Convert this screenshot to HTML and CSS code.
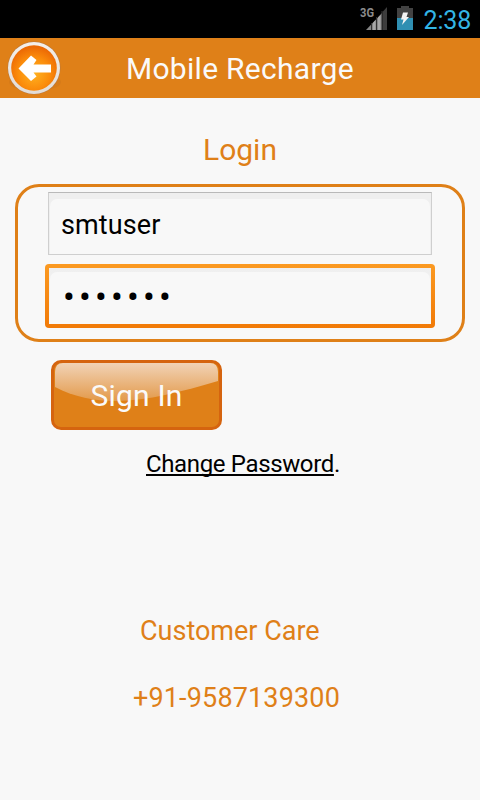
FILE: index.html
```
<!DOCTYPE html>
<html lang="en">
<head>
    <meta charset="utf-8">
    <title>Mobile Recharge</title>
    <link rel="stylesheet" href="styles.css">
</head>
<body>
    <div class="status-bar">
        <svg class="signal" width="28" height="26" viewBox="0 0 28 26">
            <path d="M6 24 22 7V24Z" fill="#858585"/>
            <path d="M13 24V17L15.500 14V24ZM18 24V11.500L20.500 9V24Z" fill="#a8a8a8"/>
            <path d="M22.500 24V6L27 1V24Z" fill="#3c3c3c"/>
            <path d="M11.500 17V24M16.500 11V24M22 5V24" stroke="#333"/>
            <text x="0" y="11" textLength="14" lengthAdjust="spacingAndGlyphs">3G</text>
        </svg>
        <svg class="battery" width="16" height="24" viewBox="0 0 16 24">
            <path d="M4 0H12V2H16V12H0V2H4Z" fill="#424242"/>
            <path d="M0 12H16V24H0Z" fill="#2f8fb2"/>
            <path d="M6 6.500H11L9.500 11H12L5 19 6.500 13.500H4Z" fill="#f4f4f4"/>
        </svg>
        <span class="clock">2:38</span>
    </div>
    <div class="header">
        <svg class="back" width="64" height="60" viewBox="0 0 64 60">
            <defs>
                <radialGradient id="ball" cx="50%" cy="62%" r="58%">
                    <stop offset="0" stop-color="#ffb321"/>
                    <stop offset=".6" stop-color="#fb8c0b"/>
                    <stop offset="1" stop-color="#ec6a05"/>
                </radialGradient>
                <linearGradient id="ring" x1="0" y1="0" x2="0" y2="1">
                    <stop offset="0" stop-color="#f4efea"/>
                    <stop offset="1" stop-color="#e2dcd6"/>
                </linearGradient>
            </defs>
            <ellipse cx="35" cy="44" rx="26" ry="9" fill="#c8741b" opacity=".4"/>
            <circle cx="34" cy="30" r="26.500" fill="#b87941"/>
            <circle cx="34" cy="30" r="26" fill="url(#ring)"/>
            <circle cx="34" cy="30" r="22.800" fill="url(#ball)"/>
            <path d="M18.500 30.500 31 17.500 36.500 22 33.500 26.500H51V34.500H33.500L36.500 38.500 31 43Z" fill="#fff"/>
        </svg>
        <h1>Mobile Recharge</h1>
    </div>
    <h2>Login</h2>
    <div class="fields">
        <div class="plain">
            <input class="field" type="text" value="smtuser">
        </div>
        <div class="focused">
            <input class="field password" type="password" value="smtuser">
        </div>
    </div>
    <button class="sign-in">
        <svg class="shine" width="171" height="71" viewBox="0 0 171 71">
            <defs>
                <linearGradient id="gloss" x1="0" y1="0" x2="0" y2="1">
                    <stop offset="0" stop-color="#f1d3b6"/>
                    <stop offset="1" stop-color="#e39a4b"/>
                </linearGradient>
            </defs>
            <path d="M4 12Q4 3 12 3H159Q167 3 167 12V21C150 26 132 31 114 35 77 43 38 45 4 27Z" fill="url(#gloss)"/>
        </svg>
        <span>Sign In</span>
    </button>
    <p class="change"><a>Change Password</a>.</p>
    <p class="care">Customer Care</p>
    <p class="phone">+91-9587139300</p>
</body>
</html>
```

FILE: styles.css
```
body {
    margin: 0;
    height: 800px;
    background: #f8f8f8;
    font-family: Roboto, sans-serif;
    overflow: hidden;
}

h1, h2, p {
    margin: 0;
    font-weight: 400;
}

.status-bar {
    display: flex;
    justify-content: flex-end;
    box-sizing: border-box;
    height: 38px;
    padding: 6px 9px 0 0;
    background: #000;
}

.signal {
    overflow: visible;
}

.signal text {
    font: bold 13px Roboto, sans-serif;
    fill: #8c8c8c;
}

.battery {
    margin: 0 11px 0 9px;
}

.clock {
    color: #33b5e5;
    font-size: 25px;
    line-height: 29px;
    letter-spacing: -0.2px;
}

.header {
    display: flex;
    height: 60px;
    background: #df8018;
}

.back {
    margin-right: 62px;
}

h1 {
    color: #fafafa;
    font-size: 30px;
    line-height: 61px;
    letter-spacing: 0.28px;
}

h2 {
    padding-top: 34px;
    color: #df8018;
    font-size: 30px;
    line-height: 36px;
    text-align: center;
}

.fields {
    box-sizing: border-box;
    width: 450px;
    height: 158px;
    margin: 16px auto 0;
    padding: 5px 27px 0;
    border: 3px solid #df8018;
    border-radius: 24px;
}

.plain {
    width: 382px;
    height: 61px;
    margin: 0 auto;
    border: 1px solid #cfcfcf;
    border-top-color: #b9b9b9;
    background: #efefef;
}

.field {
    display: block;
    box-sizing: border-box;
    width: 380px;
    height: 55px;
    margin: 0 auto;
    padding: 0 11px 4px;
    border: 0;
    border-radius: 7px 7px 0 0;
    background: #f8f8f8;
    color: #000;
    font: 27px Roboto, sans-serif;
    letter-spacing: 0.1px;
    outline: none;
}

.plain .field {
    position: relative;
    top: 6px;
}

.focused {
    width: 382px;
    height: 56px;
    margin: 9px 0 0 0;
    border: 4px solid transparent;
    border-radius: 4px;
    background: linear-gradient(#efefef, #f8f8f8) padding-box, linear-gradient(#fb9a22, #f17a07) border-box;
}

.password {
    position: relative;
    top: 4px;
    height: 52px;
    padding: 0 13px 2px;
    font-size: 35px;
    letter-spacing: 4.200px;
}

.sign-in {
    position: relative;
    display: block;
    width: 171px;
    height: 70px;
    margin: 18px 0 0 51px;
    padding: 0;
    border: 3px solid #d5640f;
    border-radius: 10px;
    background: #df8018;
    color: #fafafa;
    font: 30px Roboto, sans-serif;
    letter-spacing: 0.2px;
}

.shine {
    position: absolute;
    top: -3px;
    left: -3px;
}

.sign-in span {
    position: relative;
}

.change {
    margin: 20px 0 0 146px;
    font-size: 24px;
    line-height: 28px;
    letter-spacing: -0.36px;
}

.change a {
    text-decoration: underline;
    text-decoration-skip-ink: none;
}

.care, .phone {
    color: #df8018;
    font-size: 27px;
    line-height: 32px;
}

.care {
    margin: 137px 0 0 140px;
}

.phone {
    margin: 35px 0 0 133px;
    letter-spacing: 0.15px;
}
```
